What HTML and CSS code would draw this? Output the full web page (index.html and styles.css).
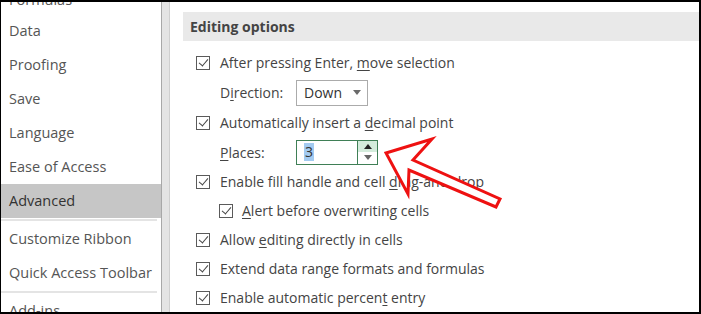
FILE: index.html
```html
<!DOCTYPE html>
<html>
<head>
<meta charset="utf-8">
<link rel="stylesheet" href="styles.css">
</head>
<body>
<div class="frame">
  <nav class="nav">
    <div class="nav-list">
      <div class="nav-item">Formulas</div>
      <div class="nav-item">Data</div>
      <div class="nav-item">Proofing</div>
      <div class="nav-item">Save</div>
      <div class="nav-item">Language</div>
      <div class="nav-item">Ease of Access</div>
      <div class="nav-item active">Advanced</div>
      <div class="nav-sep"></div>
      <div class="nav-item">Customize Ribbon</div>
      <div class="nav-item">Quick Access Toolbar</div>
      <div class="nav-sep"></div>
      <div class="nav-item">Add-ins</div>
    </div>
  </nav>
  <div class="scrollbar"></div>
  <main class="content">
    <div class="section-head">Editing options</div>
    <div class="opts">
      <div class="row"><span class="cb"></span><span>After pressing Enter, <u>m</u>ove selection</span></div>
      <div class="row row-field">
        <span class="label">D<u>i</u>rection:</span>
        <span class="select"><span>Down</span><span class="caret"></span></span>
      </div>
      <div class="row"><span class="cb"></span><span>Automatically insert a <u>d</u>ecimal point</span></div>
      <div class="row row-field row-places">
        <span class="label"><u>P</u>laces:</span>
        <span class="spin">
          <span class="spin-val"><span class="sel">3</span></span>
          <span class="spin-btns">
            <span class="spin-up"><span class="tri-up"></span></span>
            <span class="spin-down"><span class="tri-down"></span></span>
          </span>
        </span>
      </div>
      <div class="row"><span class="cb"></span><span>Enable fill handle and cell <u>d</u>rag-and-drop</span></div>
      <div class="row sub"><span class="cb"></span><span><u>A</u>lert before overwriting cells</span></div>
      <div class="row"><span class="cb"></span><span>Allow <u>e</u>diting directly in cells</span></div>
      <div class="row"><span class="cb"></span><span>Extend data range formats and formulas</span></div>
      <div class="row"><span class="cb"></span><span>Enable automatic percen<u>t</u> entry</span></div>
    </div>
  </main>
  <svg class="arrow" width="701" height="314" viewBox="0 0 701 314">
    <polygon points="386,153 432,139 413,160 500,199 496,207 409,170 408,194" fill="#fff" stroke="#ee1111" stroke-width="3" stroke-linejoin="miter"/>
  </svg>
</div>
</body>
</html>
```

FILE: styles.css
```css
* { box-sizing: border-box; }
html, body { margin: 0; padding: 0; background: #fff; }
body {
  width: 701px;
  height: 314px;
  overflow: hidden;
  font-family: "Open Sans", "Noto Sans", sans-serif;
  font-size: 14px;
  color: #444;
}
.frame {
  position: relative;
  width: 701px;
  height: 314px;
  border-top: 2px solid #000;
  border-right: 2px solid #000;
  border-bottom: 2px solid #000;
  border-left: 1px solid #000;
  display: flex;
  overflow: hidden;
}
.nav {
  width: 160px;
  flex: none;
  overflow: hidden;
}
.nav-list {
  margin-top: -20px;
}
.nav-item {
  height: 34px;
  line-height: 34px;
  padding-left: 8px;
  color: #555;
  white-space: nowrap;
  font-size: 14.5px;
}
.nav-item:first-child {
  height: 32px;
  line-height: 35px;
}
.nav-item.active {
  background: #c6c6c6;
  color: #333;
}
.nav-sep {
  height: 4px;
  display: flex;
  align-items: center;
  padding-right: 4px;
}
.nav-sep::before {
  content: "";
  display: block;
  width: 156px;
  height: 2px;
  background: #e4e4e4;
}
.scrollbar {
  width: 9px;
  flex: none;
  background: #e4e4e4;
  border-left: 1px solid #a8a8a8;
  border-right: 1px solid #cfcfcf;
}
.content {
  flex: 1;
  padding-top: 10px;
  padding-left: 13px;
}
.section-head {
  height: 29px;
  line-height: 29px;
  background: #e9e9e9;
  padding-left: 7px;
  font-weight: 700;
  color: #444;
  font-size: 14px;
}
.opts {
  padding-top: 7px;
  padding-left: 13px;
}
.row {
  height: 29px;
  display: flex;
  align-items: center;
  gap: 10px;
  white-space: nowrap;
}
.row.sub { padding-left: 23px; gap: 9px; }
.row-field { height: 31px; gap: 0; padding-left: 24px; }
.row-places { height: 30px; }
.label { width: 76px; }
u { text-decoration: underline; text-underline-offset: 2px; }
.cb {
  width: 14px;
  height: 14px;
  flex: none;
  border: 1px solid #5a5a5a;
  position: relative;
}
.cb::after {
  content: "";
  position: absolute;
  left: 4px;
  top: 0px;
  width: 4px;
  height: 8px;
  border-right: 1.5px solid #444;
  border-bottom: 1.5px solid #444;
  transform: rotate(40deg);
}
.select {
  width: 72px;
  height: 26px;
  border: 1px solid #ababab;
  display: flex;
  align-items: center;
  justify-content: space-between;
  padding: 0 6px 0 7px;
  color: #333;
}
.caret {
  width: 0;
  height: 0;
  border-left: 4px solid transparent;
  border-right: 4px solid transparent;
  border-top: 5px solid #6a6a6a;
}
.spin {
  width: 82px;
  height: 25px;
  border: 1px solid #3f7f56;
  display: flex;
}
.spin-val {
  flex: 1;
  display: flex;
  align-items: center;
  padding-left: 7px;
}
.sel {
  background: #a3cbf1;
  color: #333;
  line-height: 18px;
  padding: 0 1px;
}
.spin-btns {
  width: 20px;
  border-left: 1px solid #3f7f56;
  display: flex;
  flex-direction: column;
}
.spin-up, .spin-down {
  flex: 1;
  display: flex;
  align-items: center;
  justify-content: center;
}
.spin-up { background: #d4ecdc; }
.tri-up {
  width: 0; height: 0;
  border-left: 4px solid transparent;
  border-right: 4px solid transparent;
  border-bottom: 5px solid #222;
}
.tri-down {
  width: 0; height: 0;
  border-left: 4px solid transparent;
  border-right: 4px solid transparent;
  border-top: 5px solid #666;
}
.arrow {
  position: absolute;
  left: -1px;
  top: -2px;
  pointer-events: none;
}
```
